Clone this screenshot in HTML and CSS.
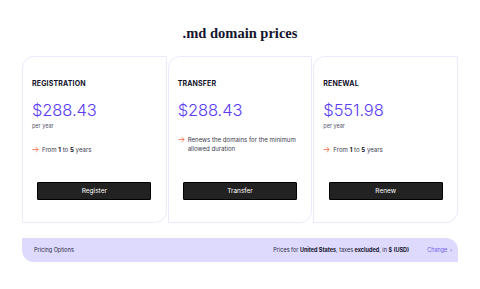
FILE: index.html
```html
<!DOCTYPE html>
<html lang="en">
<head>
<meta charset="utf-8">
<title>.md domain prices</title>
<link rel="stylesheet" href="styles.css">
</head>
<body>
<main class="page">
  <h1 class="title">.md domain prices</h1>
  <section class="cards">
    <article class="card">
      <h2 class="card-title">REGISTRATION</h2>
      <div class="price">$288.43</div>
      <div class="per">per year</div>
      <div class="feature">
        <svg class="arrow" viewBox="0 0 8 8" width="7" height="7"><path d="M0.5 4H7M4.2 1.2L7 4L4.2 6.8" fill="none" stroke="#f4734f" stroke-width="1"/></svg>
        <span>From <b>1</b> to <b>5</b> years</span>
      </div>
      <button class="btn">Register</button>
    </article>
    <article class="card">
      <h2 class="card-title">TRANSFER</h2>
      <div class="price">$288.43</div>
      <div class="feature">
        <svg class="arrow" viewBox="0 0 8 8" width="7" height="7"><path d="M0.5 4H7M4.2 1.2L7 4L4.2 6.8" fill="none" stroke="#f4734f" stroke-width="1"/></svg>
        <span>Renews the domains for the minimum allowed duration</span>
      </div>
      <button class="btn">Transfer</button>
    </article>
    <article class="card">
      <h2 class="card-title">RENEWAL</h2>
      <div class="price">$551.98</div>
      <div class="per">per year</div>
      <div class="feature">
        <svg class="arrow" viewBox="0 0 8 8" width="7" height="7"><path d="M0.5 4H7M4.2 1.2L7 4L4.2 6.8" fill="none" stroke="#f4734f" stroke-width="1"/></svg>
        <span>From <b>1</b> to <b>5</b> years</span>
      </div>
      <button class="btn">Renew</button>
    </article>
  </section>
  <footer class="options">
    <span class="opt-label">Pricing Options</span>
    <span class="opt-info">Prices for <b>United States</b>, taxes <b>excluded</b>, in <b>$ (USD)</b></span>
    <a class="change" href="#">Change <span class="chev">›</span></a>
  </footer>
</main>
</body>
</html>
```

FILE: styles.css
```css
* { box-sizing: border-box; }
html, body { margin: 0; padding: 0; background: #ffffff; }
body {
  font-family: Inter, "Noto Sans", sans-serif;
  color: #1b1b2f;
}
.page {
  width: 436px;
  margin: 0 auto;
  padding-top: 24px;
}
.title {
  margin: 0;
  font-family: "Liberation Serif", "DejaVu Serif", serif;
  font-weight: 700;
  font-size: 14.5px;
  line-height: 18px;
  text-align: center;
  color: #14142e;
}
.cards {
  margin-top: 14px;
  display: grid;
  grid-template-columns: 1fr 1fr 1fr;
  gap: 1px;
}
.card {
  height: 167px;
  border: 1px solid #ebe9fd;
  border-radius: 12px 0 12px 0;
  padding: 22px 9px 22px 9px;
  display: flex;
  flex-direction: column;
}
.card-title {
  margin: 0;
  font-size: 7px;
  line-height: 9px;
  font-weight: 700;
  letter-spacing: 0.15px;
  color: #12122a;
}
.price {
  margin-top: 12px;
  font-size: 16.5px;
  line-height: 20px;
  font-weight: 300;
  color: #5b3cf5;
  letter-spacing: -0.1px;
}
.per {
  margin-top: 2px;
  font-size: 5.5px;
  line-height: 8px;
  color: #55556a;
}
.feature {
  margin-top: 15px;
  display: flex;
  align-items: flex-start;
  gap: 3px;
  font-size: 6.1px;
  line-height: 9px;
  color: #3a3a4e;
}
.feature b { color: #12122a; font-weight: 700; }
.arrow { flex: none; margin-top: 1px; }
.btn {
  margin-top: auto;
  align-self: center;
  width: 114px;
  height: 18px;
  padding: 0;
  background: #222222;
  border: 1px solid #000000;
  border-radius: 1px;
  color: #ffffff;
  font-family: Inter, "Noto Sans", sans-serif;
  font-size: 6.5px;
  line-height: 16px;
}
.options {
  margin-top: 15px;
  height: 24px;
  background: #dddafd;
  border-radius: 0 12px 0 12px;
  padding: 0 6px 0 12px;
  display: flex;
  align-items: center;
  font-size: 5.5px;
  color: #2a2a3e;
}
.opt-label { flex: 1; }
.opt-info b { font-weight: 700; color: #14142a; }
.change {
  margin-left: 18px;
  color: #7461ee;
  text-decoration: none;
}
.chev { margin-left: 1px; }
```
